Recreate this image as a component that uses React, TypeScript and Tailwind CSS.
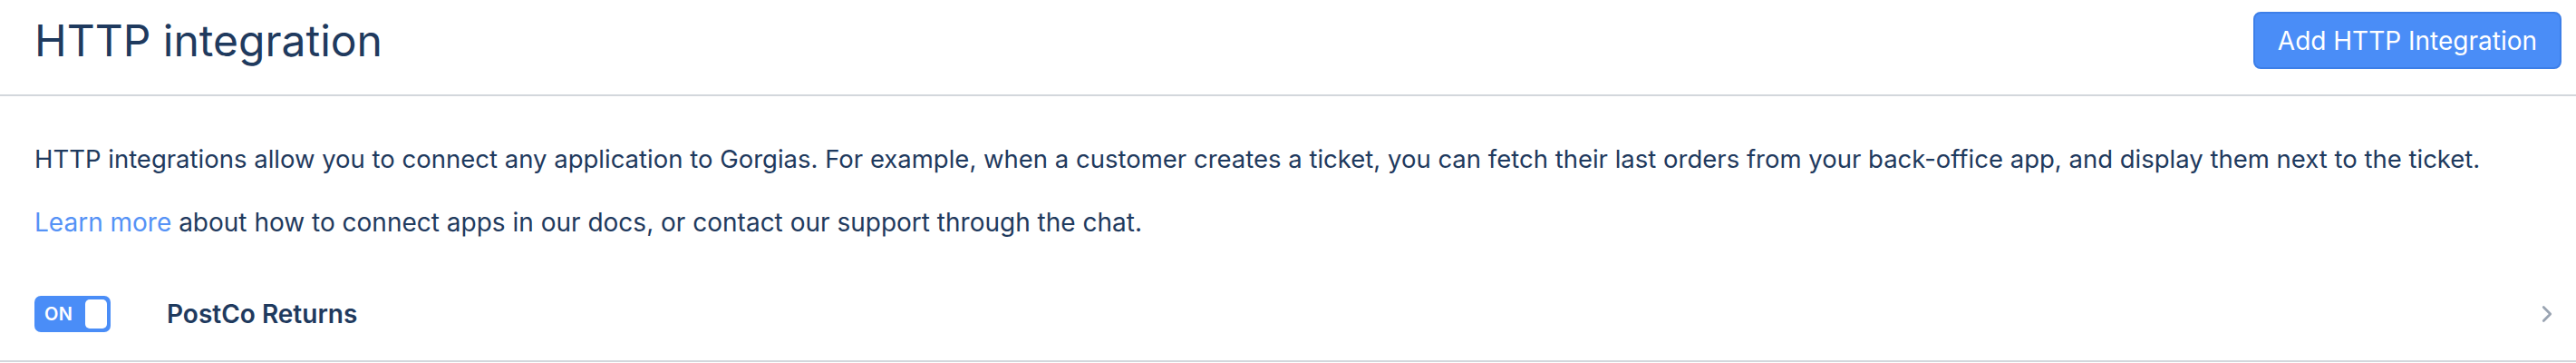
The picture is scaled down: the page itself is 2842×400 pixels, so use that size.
import { ChevronRight } from "lucide-react";

const font = { fontFamily: "Inter, 'Noto Sans', sans-serif" };

function Toggle({ on }: { on: boolean }) {
  return (
    <div className="flex h-[40px] w-[84px] shrink-0 items-center justify-between rounded-[7px] bg-[#4a8df7] pl-[11px] pr-[4px]">
      <span className="text-[20px] font-semibold leading-none tracking-[0.5px] text-white">
        {on ? "ON" : "OFF"}
      </span>
      <span className="h-[32px] w-[24px] rounded-[5px] bg-white" />
    </div>
  );
}

export default function App() {
  return (
    <div className="min-h-[400px] bg-white text-[#1f3a5e]" style={font}>
      <header className="flex items-center justify-between border-b-2 border-[#d3d7dc] pb-[28px] pl-[38px] pr-[16px] pt-[13px]">
        <h1 className="text-[48px] font-normal leading-[63px]">HTTP integration</h1>
        <button className="h-[63px] rounded-[8px] border-2 border-[#3d7fe8] bg-[#4a8df7] px-[25px] text-[28px] leading-none text-white">
          Add HTTP Integration
        </button>
      </header>

      <div className="px-[38px] pt-[49px]">
        <p className="text-[27.5px] leading-[40px]">
          HTTP integrations allow you to connect any application to Gorgias. For example, when a
          customer creates a ticket, you can fetch their last orders from your back-office app, and
          display them next to the ticket.
        </p>
        <p className="mt-[30px] text-[28px] leading-[40px]">
          <a className="text-[#5592f6]">Learn more</a> about how to connect apps in our docs, or
          contact our support through the chat.
        </p>
      </div>

      <div className="mt-[30px] flex h-[104px] items-center border-b-2 border-[#d3d7dc] pl-[38px] pr-[17px]">
        <Toggle on />
        <span className="ml-[62px] text-[28px] font-semibold">PostCo Returns</span>
        <ChevronRight className="ml-auto h-[30px] w-[30px] text-[#9aa4b2]" strokeWidth={2.2} />
      </div>
    </div>
  );
}
